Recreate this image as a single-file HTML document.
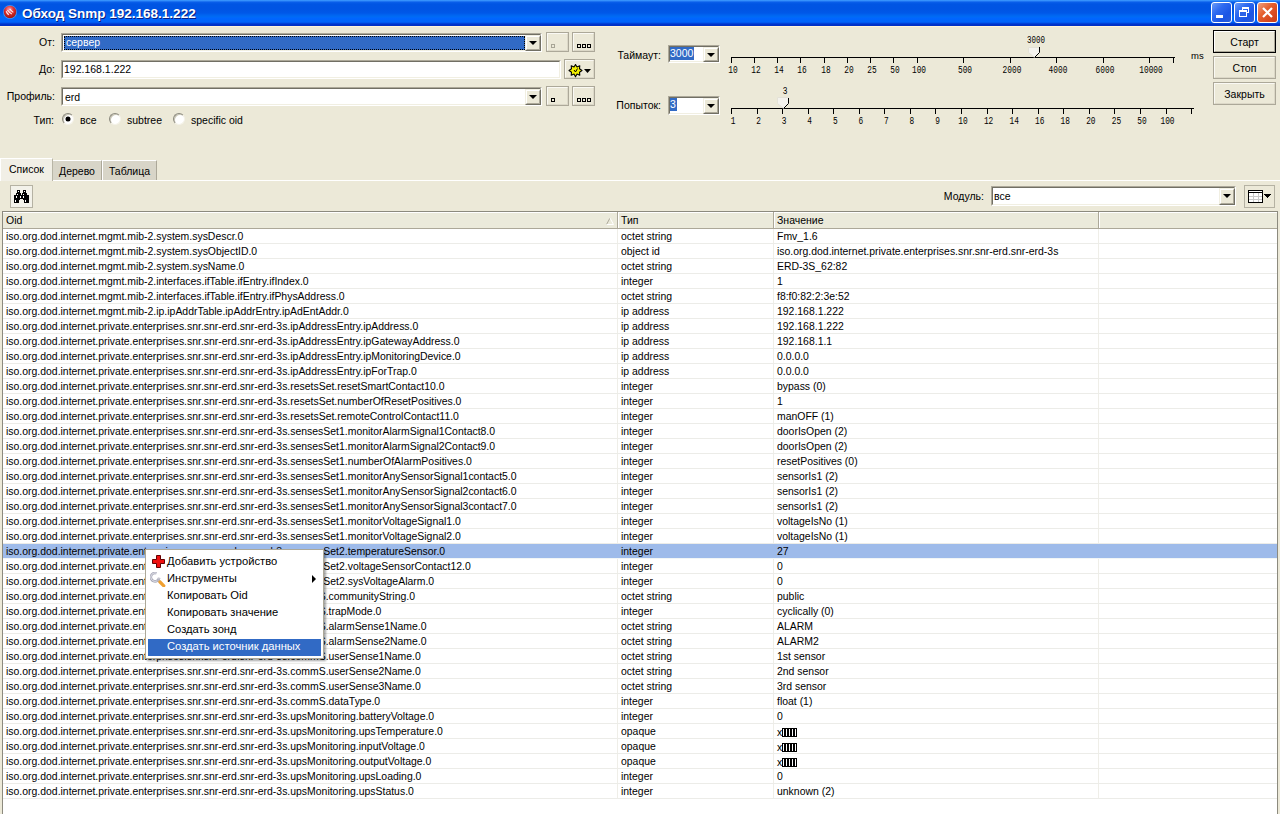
<!DOCTYPE html>
<html><head><meta charset="utf-8">
<style>
*{box-sizing:border-box;margin:0;padding:0}
html,body{width:1280px;height:814px;overflow:hidden}
body{background:#ECE9D8;font-family:"Liberation Sans",sans-serif;font-size:10.5px;color:#000;position:relative}
.abs{position:absolute}
.lbl{position:absolute;white-space:nowrap;line-height:13px}
/* title bar */
#title{position:absolute;left:0;top:0;width:1280px;height:26px;
 background:linear-gradient(#3D9CFF 0px,#2E86F8 1px,#0A5FEA 2px,#0055E3 4px,#0054E3 9px,#0058E8 13px,#0064F0 15px,#006CF5 17px,#0066FF 18px,#0064FA 22px,#0050E6 23px,#0034CC 24px,#0030C4 26px)}
#ttext{position:absolute;left:22px;top:6px;font:bold 13.5px "Liberation Sans",sans-serif;color:#fff;text-shadow:1px 1px 0 #0A1E80;white-space:nowrap;line-height:16px}
.tbtn{position:absolute;top:2px;width:21px;height:21px;border:1px solid #fff;border-radius:3px;
 background:linear-gradient(135deg,#6C9CF8 0%,#2F6BF0 35%,#1B55E5 70%,#2A5CD8 100%)}
.tbtn.close{background:linear-gradient(135deg,#F0A080 0%,#E5602E 40%,#D84A20 70%,#C83E18 100%)}
#bodytop{position:absolute;left:0;top:26px;width:1280px;height:1px;background:#FFF4DA}
/* sunken field */
.field{position:absolute;background:#fff;border-top:1px solid #ACA899;border-left:1px solid #ACA899;border-right:1px solid #fff;border-bottom:1px solid #fff}
.field::before{content:"";position:absolute;left:0;top:0;right:0;bottom:0;border-top:1px solid #716F64;border-left:1px solid #716F64;border-right:1px solid #F1EFE2;border-bottom:1px solid #F1EFE2}
.ftxt{position:absolute;white-space:nowrap;line-height:13px}
.ddb{position:absolute;width:16px;background:#ECE9D8;border-top:1px solid #F1EFE2;border-left:1px solid #F1EFE2;border-right:1px solid #716F64;border-bottom:1px solid #716F64}
.ddb::before{content:"";position:absolute;left:0;top:0;right:0;bottom:0;border-top:1px solid #fff;border-left:1px solid #fff;border-right:1px solid #ACA899;border-bottom:1px solid #ACA899}
.arrow{position:absolute;width:0;height:0;border-left:4px solid transparent;border-right:4px solid transparent;border-top:4px solid #000}
.btn{position:absolute;background:#ECE9D8;border-top:1px solid #fff;border-left:1px solid #fff;border-right:1px solid #ACA899;border-bottom:1px solid #ACA899}
.btn::after{content:"";position:absolute;left:-1px;top:-1px;right:-1px;bottom:-1px;border:1px solid #C5C2B2}
.btn2{position:absolute;background:#ECE9D8;border:1px solid #ACA899}
.btn2::before{content:"";position:absolute;left:0;top:0;right:0;bottom:0;border-top:1px solid #FAF9F4;border-left:1px solid #FAF9F4;border-right:1px solid #DCD8C8;border-bottom:1px solid #DCD8C8}
.sq{position:absolute;width:4px;height:4px;border:1px solid #000}
.radio{position:absolute;width:12px;height:12px;border-radius:50%;background:#fff;
 border:1px solid;border-color:#8A887C #F4F2E8 #F4F2E8 #8A887C;box-shadow:inset 1px 1px 0 #C9C6B6}
.radio.on::after{content:"";position:absolute;left:3px;top:3px;width:4px;height:4px;border-radius:50%;background:#000;box-shadow:0 0 0 0.5px #000}
/* tabs */
.tab{position:absolute;white-space:nowrap;line-height:13px;text-align:center}
/* list */
#list{position:absolute;left:2px;top:211px;width:1276px;height:603px;background:#fff;border-left:1px solid #8C8A7E;border-top:1px solid #8C8A7E;border-right:1px solid #8C8A7E;overflow:hidden}
#hdr{position:absolute;left:0;top:0;width:1275px;height:17px;background:#EBEADB;border-bottom:1px solid #ACA899;border-top:1px solid #fff}
.hc{position:absolute;top:0;height:16px;line-height:14px;white-space:nowrap}
.hsep{position:absolute;top:-1px;width:2px;height:16px;border-left:1px solid #ACA899;border-right:1px solid #fff}
.row{position:absolute;left:0;width:1275px;height:15px;border-bottom:1px solid #ECECE8;white-space:nowrap;line-height:14px;font-size:10.45px}
.row.sel{background:#9EBBEA;border-bottom-color:#F2F6F6}
.row span{position:absolute;top:1px}
.c1{left:3px}.c2{left:618px}.c3{left:774px}
.vg{position:absolute;top:17px;width:1px;height:570px;background:#EFEEE8}
.opq i{display:inline-block;width:3px;height:9px;border:1px solid #000;margin-right:0px;vertical-align:-1px}
/* menu */
#menu{position:absolute;left:145px;top:549px;width:179px;height:110px;background:#fff;border:1px solid #ACA899;box-shadow:2px 2px 2px rgba(0,0,0,0.35)}
.mi{position:absolute;left:2px;margin-top:1px;width:173px;height:17px;line-height:15px;font-size:11.2px;white-space:nowrap;padding-left:20px}
.mi.hl{background:#316AC5;color:#fff}
</style></head><body>

<div id="title">
 <svg class="abs" style="left:0;top:0" width="22" height="24" viewBox="0 0 22 24">
  <defs><radialGradient id="rg" cx="0.45" cy="0.3" r="0.75"><stop offset="0" stop-color="#F8A0B8"/><stop offset="0.45" stop-color="#E03030"/><stop offset="1" stop-color="#901010"/></radialGradient></defs>
  <circle cx="10" cy="12" r="7" fill="#9CD4FF" opacity="0.45"/>
  <circle cx="10" cy="12" r="6.2" fill="url(#rg)"/>
  <path d="M6.2 11.2 Q7 13.5 8.8 14.7 M7.4 10 Q9.5 12.8 11.8 13.9 M9.7 8.8 Q11.5 11 13.3 12.4" stroke="#fff" stroke-width="1.1" fill="none" opacity="0.9"/>
 </svg>
 <div id="ttext">Обход Snmp 192.168.1.222</div>
 <div class="tbtn" style="left:1211px"><div class="abs" style="left:4px;top:12px;width:7px;height:3px;background:#fff"></div></div>
 <div class="tbtn" style="left:1234px">
  <div class="abs" style="left:7px;top:4px;width:7px;height:6px;border:1px solid #fff;border-top-width:2px"></div>
  <div class="abs" style="left:4px;top:7px;width:8px;height:7px;border:1px solid #fff;border-top-width:2px;background:#2B63E8"></div>
 </div>
 <div class="tbtn close" style="left:1257px">
  <svg class="abs" style="left:0;top:0" width="19" height="19"><path d="M5 5L14 14M14 5L5 14" stroke="#fff" stroke-width="2.2"/></svg>
 </div>
</div>
<div id="bodytop"></div>

<!-- От -->
<div class="lbl" style="right:1225px;top:36px">От:</div>
<div class="field" style="left:61px;top:33px;width:481px;height:19px">
 <div class="abs" style="left:2px;top:2px;width:461px;height:14px;background:#316AC5;outline:1px dotted #000;outline-offset:-1px"></div>
 <div class="ftxt" style="left:4px;top:2px;color:#fff">сервер</div>
 <div class="ddb" style="left:463px;top:1px;height:16px"><div class="arrow" style="left:3px;top:5px"></div></div>
</div>
<div class="btn2" style="left:546px;top:32px;width:23px;height:20px"><div class="sq" style="left:4px;top:11px;border-color:#A8A596"></div></div>
<div class="btn2" style="left:572px;top:32px;width:23px;height:20px">
 <div class="sq" style="left:4px;top:11px"></div><div class="sq" style="left:9px;top:11px"></div><div class="sq" style="left:14px;top:11px"></div>
</div>

<!-- До -->
<div class="lbl" style="right:1225px;top:63px">До:</div>
<div class="field" style="left:61px;top:60px;width:500px;height:19px">
 <div class="ftxt" style="left:2px;top:2px">192.168.1.222</div>
</div>
<div class="btn2" style="left:564px;top:59px;width:31px;height:20px">
 <svg class="abs" style="left:3px;top:4px" width="26" height="14" viewBox="0 0 26 14">
  <path d="M7.5 0.5 L9 3 L11.8 1.8 L11.5 4.8 L14 6.5 L11.5 8.2 L11.8 11.2 L9 10 L7.5 12.8 L6 10 L3.2 11.2 L3.5 8.2 L1 6.5 L3.5 4.8 L3.2 1.8 L6 3 Z" fill="#F4F000" stroke="#000" stroke-width="1.1" stroke-linejoin="round"/>
  <path d="M6 6 L7.5 8 L9.5 4.5" stroke="#000" stroke-width="1" fill="none"/>
  <path d="M16 5H23L19.5 9Z" fill="#000"/>
 </svg>
</div>

<!-- Профиль -->
<div class="lbl" style="right:1225px;top:90px">Профиль:</div>
<div class="field" style="left:61px;top:87px;width:481px;height:19px">
 <div class="ftxt" style="left:3px;top:3px">erd</div>
 <div class="ddb" style="left:463px;top:1px;height:16px"><div class="arrow" style="left:3px;top:5px"></div></div>
</div>
<div class="btn2" style="left:546px;top:86px;width:23px;height:20px"><div class="sq" style="left:4px;top:11px"></div></div>
<div class="btn2" style="left:572px;top:86px;width:23px;height:20px">
 <div class="sq" style="left:4px;top:11px"></div><div class="sq" style="left:9px;top:11px"></div><div class="sq" style="left:14px;top:11px"></div>
</div>

<!-- Тип -->
<div class="lbl" style="right:1226px;top:114px">Тип:</div>
<div class="radio on" style="left:62px;top:113px"></div>
<div class="lbl" style="left:80px;top:114px">все</div>
<div class="radio" style="left:109px;top:113px"></div>
<div class="lbl" style="left:127px;top:114px">subtree</div>
<div class="radio" style="left:173px;top:113px"></div>
<div class="lbl" style="left:191px;top:114px">specific oid</div>

<!-- timeout -->
<div class="lbl" style="right:619px;top:49px">Таймаут:</div>
<div class="field" style="left:668px;top:45px;width:52px;height:18px">
 <div class="abs" style="left:1px;top:1px;width:24px;height:13px;background:#316AC5"></div>
 <div class="ftxt" style="left:1px;top:1px;color:#fff">3000</div>
 <div class="ddb" style="left:34px;top:1px;height:15px"><div class="arrow" style="left:3px;top:5px"></div></div>
</div>
<div class="lbl" style="right:619px;top:99px">Попыток:</div>
<div class="field" style="left:668px;top:96px;width:52px;height:19px">
 <div class="abs" style="left:1px;top:1px;width:7px;height:13px;background:#316AC5"></div>
 <div class="ftxt" style="left:1px;top:1px;color:#fff">3</div>
 <div class="ddb" style="left:34px;top:1px;height:16px"><div class="arrow" style="left:3px;top:5px"></div></div>
</div>
<svg class="abs" style="left:0;top:0" width="1280" height="140" font-family="Liberation Mono" font-size="10.5"><path d="M731 57.5H1175M731.5 57V63M754.5 57V63M777.5 57V63M800.5 57V63M824.5 57V63M847.5 57V63M870.5 57V63M893.5 57V63M917.5 57V63M963.5 57V63M1010.5 57V63M1056.5 57V63M1103.5 57V63M1149.5 57V63M1173.5 57V63" stroke="#000" stroke-width="1" fill="none"/><text x="733.0" y="73" text-anchor="middle" textLength="9.4" lengthAdjust="spacingAndGlyphs">10</text><text x="756.0" y="73" text-anchor="middle" textLength="9.4" lengthAdjust="spacingAndGlyphs">12</text><text x="779.0" y="73" text-anchor="middle" textLength="9.4" lengthAdjust="spacingAndGlyphs">14</text><text x="802.0" y="73" text-anchor="middle" textLength="9.4" lengthAdjust="spacingAndGlyphs">16</text><text x="826.0" y="73" text-anchor="middle" textLength="9.4" lengthAdjust="spacingAndGlyphs">18</text><text x="849.0" y="73" text-anchor="middle" textLength="9.4" lengthAdjust="spacingAndGlyphs">20</text><text x="872.0" y="73" text-anchor="middle" textLength="9.4" lengthAdjust="spacingAndGlyphs">25</text><text x="895.0" y="73" text-anchor="middle" textLength="9.4" lengthAdjust="spacingAndGlyphs">50</text><text x="919.0" y="73" text-anchor="middle" textLength="14.1" lengthAdjust="spacingAndGlyphs">100</text><text x="965.0" y="73" text-anchor="middle" textLength="14.1" lengthAdjust="spacingAndGlyphs">500</text><text x="1012.0" y="73" text-anchor="middle" textLength="18.8" lengthAdjust="spacingAndGlyphs">2000</text><text x="1058.0" y="73" text-anchor="middle" textLength="18.8" lengthAdjust="spacingAndGlyphs">4000</text><text x="1105.0" y="73" text-anchor="middle" textLength="18.8" lengthAdjust="spacingAndGlyphs">6000</text><text x="1151.0" y="73" text-anchor="middle" textLength="23.5" lengthAdjust="spacingAndGlyphs">10000</text><path d="M731 108.5H1194M731.5 108V114M757.5 108V114M782.5 108V114M808.5 108V114M833.5 108V114M859.5 108V114M884.5 108V114M910.5 108V114M935.5 108V114M961.5 108V114M987.5 108V114M1012.5 108V114M1038.5 108V114M1063.5 108V114M1089.5 108V114M1114.5 108V114M1140.5 108V114M1166.5 108V114M1191.5 108V114" stroke="#000" stroke-width="1" fill="none"/><text x="733.0" y="124" text-anchor="middle" textLength="4.7" lengthAdjust="spacingAndGlyphs">1</text><text x="758.56" y="124" text-anchor="middle" textLength="4.7" lengthAdjust="spacingAndGlyphs">2</text><text x="784.12" y="124" text-anchor="middle" textLength="4.7" lengthAdjust="spacingAndGlyphs">3</text><text x="809.68" y="124" text-anchor="middle" textLength="4.7" lengthAdjust="spacingAndGlyphs">4</text><text x="835.24" y="124" text-anchor="middle" textLength="4.7" lengthAdjust="spacingAndGlyphs">5</text><text x="860.8" y="124" text-anchor="middle" textLength="4.7" lengthAdjust="spacingAndGlyphs">6</text><text x="886.36" y="124" text-anchor="middle" textLength="4.7" lengthAdjust="spacingAndGlyphs">7</text><text x="911.92" y="124" text-anchor="middle" textLength="4.7" lengthAdjust="spacingAndGlyphs">8</text><text x="937.48" y="124" text-anchor="middle" textLength="4.7" lengthAdjust="spacingAndGlyphs">9</text><text x="963.04" y="124" text-anchor="middle" textLength="9.4" lengthAdjust="spacingAndGlyphs">10</text><text x="988.6" y="124" text-anchor="middle" textLength="9.4" lengthAdjust="spacingAndGlyphs">12</text><text x="1014.16" y="124" text-anchor="middle" textLength="9.4" lengthAdjust="spacingAndGlyphs">14</text><text x="1039.72" y="124" text-anchor="middle" textLength="9.4" lengthAdjust="spacingAndGlyphs">16</text><text x="1065.28" y="124" text-anchor="middle" textLength="9.4" lengthAdjust="spacingAndGlyphs">18</text><text x="1090.84" y="124" text-anchor="middle" textLength="9.4" lengthAdjust="spacingAndGlyphs">20</text><text x="1116.4" y="124" text-anchor="middle" textLength="9.4" lengthAdjust="spacingAndGlyphs">25</text><text x="1141.96" y="124" text-anchor="middle" textLength="9.4" lengthAdjust="spacingAndGlyphs">50</text><text x="1167.52" y="124" text-anchor="middle" textLength="14.1" lengthAdjust="spacingAndGlyphs">100</text><path d="M1028.5 47.5H1039.5V52.5L1034.5 57.5L1028.5 52.5Z" fill="#F4F3EE" stroke="#E4E2D8"/><path d="M1039.5 47V52.5L1034.5 57.5" fill="none" stroke="#000"/><text x="1036" y="43" text-anchor="middle" textLength="18" lengthAdjust="spacingAndGlyphs">3000</text><path d="M777.5 97.5H788.5V103.5L783.5 108.5L777.5 103.5Z" fill="#F4F3EE" stroke="#E4E2D8"/><path d="M788.5 98V103.5L783.5 108.5" fill="none" stroke="#000"/><text x="785" y="94" text-anchor="middle" textLength="4.7" lengthAdjust="spacingAndGlyphs">3</text></svg>
<div class="lbl" style="left:1191px;top:49px;font-size:9.5px">ms</div>

<!-- buttons -->
<div class="abs" style="left:1213px;top:30px;width:63px;height:23px;border:1px solid #000;background:#ECE9D8">
 <div class="abs" style="left:0;top:0;width:61px;height:21px;border-top:1px solid #fff;border-left:1px solid #fff;border-right:1px solid #ACA899;border-bottom:1px solid #ACA899"></div>
 <div class="lbl" style="left:0;width:61px;text-align:center;top:5px">Старт</div>
</div>
<div class="btn2" style="left:1213px;top:56px;width:63px;height:23px"><div class="lbl" style="left:0;width:61px;text-align:center;top:5px">Стоп</div></div>
<div class="btn2" style="left:1213px;top:82px;width:63px;height:23px"><div class="lbl" style="left:0;width:61px;text-align:center;top:5px">Закрыть</div></div>

<!-- tabs -->
<div class="abs" style="left:0;top:180px;width:1280px;height:1px;background:#fff"></div>
<div class="abs" style="left:52px;top:160px;width:50px;height:20px;background:#D8D5C8;border-top:1px solid #fff;border-left:1px solid #fff;border-right:1px solid #ACA899"></div>
<div class="tab" style="left:52px;top:165px;width:50px">Дерево</div>
<div class="abs" style="left:102px;top:160px;width:55px;height:20px;background:#D8D5C8;border-top:1px solid #fff;border-left:1px solid #fff;border-right:1px solid #ACA899"></div>
<div class="tab" style="left:102px;top:165px;width:55px">Таблица</div>
<div class="abs" style="left:0px;top:158px;width:53px;height:23px;background:#F1EFE6;border-top:1px solid #fff;border-left:1px solid #fff;border-right:1px solid #B8B5A6"></div>
<div class="tab" style="left:1px;top:163px;width:51px">Список</div>

<!-- toolbar -->
<div class="abs" style="left:10px;top:185px;width:23px;height:23px;border:1px solid #B5B2A3;background:#F3F2EA">
 <svg class="abs" style="left:3px;top:4px" width="15" height="13" shape-rendering="crispEdges">
  <path d="M3 0h3v3h-3zM9 0h3v3h-3zM2 3h5v2h-5zM8 3h5v2h-5zM0 5h15v4h-15zM0 9h5v4h-5zM10 9h5v4h-5zM5 9h1v1h-1zM9 9h1v1h-1z" fill="#000"/>
  <path d="M4 1h1v1h-1zM10 1h1v1h-1zM3 4h1v1h-1zM9 4h1v1h-1zM2 6h1v2h-1zM6 6h1v2h-1zM9 6h1v2h-1zM1 10h1v2h-1zM11 10h1v2h-1z" fill="#fff"/>
 </svg>
</div>
<div class="lbl" style="right:296px;top:190px">Модуль:</div>
<div class="field" style="left:991px;top:186px;width:245px;height:20px">
 <div class="ftxt" style="left:2px;top:3px">все</div>
 <div class="ddb" style="left:227px;top:1px;height:17px"><div class="arrow" style="left:3px;top:5px"></div></div>
</div>
<div class="abs" style="left:1244px;top:185px;width:31px;height:23px;border:1px solid #B5B2A3;background:#ECE9D8">
 <svg class="abs" style="left:3px;top:4px" width="26" height="14" shape-rendering="crispEdges">
  <rect x="0" y="0" width="15" height="13" fill="#000"/>
  <rect x="1" y="1" width="13" height="1" fill="#fff"/>
  <rect x="1" y="3" width="13" height="9" fill="#fff"/>
  <path d="M1 6h13M1 9h13M5 3v9M10 3v9" stroke="#C8C8C8" fill="none"/>
  <path d="M16 4h7v1h-1v1h-1v1h-1v1h-1v-1h-1v-1h-1v-1h-1z" fill="#000"/>
 </svg>
</div>

<!-- list -->
<div id="list">
 <div id="hdr">
  <div class="hc" style="left:3px">Oid</div>
  <svg class="abs" style="left:602px;top:4px" width="10" height="8"><path d="M1.5 7.5L5 1" stroke="#ACA899" fill="none"/><path d="M5 1L8.5 7.5H1.5" stroke="#fff" fill="none"/></svg>
  <div class="hsep" style="left:614px"></div>
  <div class="hc" style="left:618px">Тип</div>
  <div class="hsep" style="left:770px"></div>
  <div class="hc" style="left:774px">Значение</div>
  <div class="hsep" style="left:1095px"></div>
 </div>
 <div class="vg" style="left:614px"></div>
 <div class="vg" style="left:770px"></div>
 <div class="vg" style="left:1095px"></div>
<div class="row" style="top:17px"><span class="c1">iso.org.dod.internet.mgmt.mib-2.system.sysDescr.0</span><span class="c2">octet string</span><span class="c3">Fmv_1.6</span></div>
<div class="row" style="top:32px"><span class="c1">iso.org.dod.internet.mgmt.mib-2.system.sysObjectID.0</span><span class="c2">object id</span><span class="c3">iso.org.dod.internet.private.enterprises.snr.snr-erd.snr-erd-3s</span></div>
<div class="row" style="top:47px"><span class="c1">iso.org.dod.internet.mgmt.mib-2.system.sysName.0</span><span class="c2">octet string</span><span class="c3">ERD-3S_62:82</span></div>
<div class="row" style="top:62px"><span class="c1">iso.org.dod.internet.mgmt.mib-2.interfaces.ifTable.ifEntry.ifIndex.0</span><span class="c2">integer</span><span class="c3">1</span></div>
<div class="row" style="top:77px"><span class="c1">iso.org.dod.internet.mgmt.mib-2.interfaces.ifTable.ifEntry.ifPhysAddress.0</span><span class="c2">octet string</span><span class="c3">f8:f0:82:2:3e:52</span></div>
<div class="row" style="top:92px"><span class="c1">iso.org.dod.internet.mgmt.mib-2.ip.ipAddrTable.ipAddrEntry.ipAdEntAddr.0</span><span class="c2">ip address</span><span class="c3">192.168.1.222</span></div>
<div class="row" style="top:107px"><span class="c1">iso.org.dod.internet.private.enterprises.snr.snr-erd.snr-erd-3s.ipAddressEntry.ipAddress.0</span><span class="c2">ip address</span><span class="c3">192.168.1.222</span></div>
<div class="row" style="top:122px"><span class="c1">iso.org.dod.internet.private.enterprises.snr.snr-erd.snr-erd-3s.ipAddressEntry.ipGatewayAddress.0</span><span class="c2">ip address</span><span class="c3">192.168.1.1</span></div>
<div class="row" style="top:137px"><span class="c1">iso.org.dod.internet.private.enterprises.snr.snr-erd.snr-erd-3s.ipAddressEntry.ipMonitoringDevice.0</span><span class="c2">ip address</span><span class="c3">0.0.0.0</span></div>
<div class="row" style="top:152px"><span class="c1">iso.org.dod.internet.private.enterprises.snr.snr-erd.snr-erd-3s.ipAddressEntry.ipForTrap.0</span><span class="c2">ip address</span><span class="c3">0.0.0.0</span></div>
<div class="row" style="top:167px"><span class="c1">iso.org.dod.internet.private.enterprises.snr.snr-erd.snr-erd-3s.resetsSet.resetSmartContact10.0</span><span class="c2">integer</span><span class="c3">bypass (0)</span></div>
<div class="row" style="top:182px"><span class="c1">iso.org.dod.internet.private.enterprises.snr.snr-erd.snr-erd-3s.resetsSet.numberOfResetPositives.0</span><span class="c2">integer</span><span class="c3">1</span></div>
<div class="row" style="top:197px"><span class="c1">iso.org.dod.internet.private.enterprises.snr.snr-erd.snr-erd-3s.resetsSet.remoteControlContact11.0</span><span class="c2">integer</span><span class="c3">manOFF (1)</span></div>
<div class="row" style="top:212px"><span class="c1">iso.org.dod.internet.private.enterprises.snr.snr-erd.snr-erd-3s.sensesSet1.monitorAlarmSignal1Contact8.0</span><span class="c2">integer</span><span class="c3">doorIsOpen (2)</span></div>
<div class="row" style="top:227px"><span class="c1">iso.org.dod.internet.private.enterprises.snr.snr-erd.snr-erd-3s.sensesSet1.monitorAlarmSignal2Contact9.0</span><span class="c2">integer</span><span class="c3">doorIsOpen (2)</span></div>
<div class="row" style="top:242px"><span class="c1">iso.org.dod.internet.private.enterprises.snr.snr-erd.snr-erd-3s.sensesSet1.numberOfAlarmPositives.0</span><span class="c2">integer</span><span class="c3">resetPositives (0)</span></div>
<div class="row" style="top:257px"><span class="c1">iso.org.dod.internet.private.enterprises.snr.snr-erd.snr-erd-3s.sensesSet1.monitorAnySensorSignal1contact5.0</span><span class="c2">integer</span><span class="c3">sensorIs1 (2)</span></div>
<div class="row" style="top:272px"><span class="c1">iso.org.dod.internet.private.enterprises.snr.snr-erd.snr-erd-3s.sensesSet1.monitorAnySensorSignal2contact6.0</span><span class="c2">integer</span><span class="c3">sensorIs1 (2)</span></div>
<div class="row" style="top:287px"><span class="c1">iso.org.dod.internet.private.enterprises.snr.snr-erd.snr-erd-3s.sensesSet1.monitorAnySensorSignal3contact7.0</span><span class="c2">integer</span><span class="c3">sensorIs1 (2)</span></div>
<div class="row" style="top:302px"><span class="c1">iso.org.dod.internet.private.enterprises.snr.snr-erd.snr-erd-3s.sensesSet1.monitorVoltageSignal1.0</span><span class="c2">integer</span><span class="c3">voltageIsNo (1)</span></div>
<div class="row" style="top:317px"><span class="c1">iso.org.dod.internet.private.enterprises.snr.snr-erd.snr-erd-3s.sensesSet1.monitorVoltageSignal2.0</span><span class="c2">integer</span><span class="c3">voltageIsNo (1)</span></div>
<div class="row sel" style="top:332px"><span class="c1">iso.org.dod.internet.private.enterprises.snr.snr-erd.snr-erd-3s.sensesSet2.temperatureSensor.0</span><span class="c2">integer</span><span class="c3">27</span></div>
<div class="row" style="top:347px"><span class="c1">iso.org.dod.internet.private.enterprises.snr.snr-erd.snr-erd-3s.sensesSet2.voltageSensorContact12.0</span><span class="c2">integer</span><span class="c3">0</span></div>
<div class="row" style="top:362px"><span class="c1">iso.org.dod.internet.private.enterprises.snr.snr-erd.snr-erd-3s.sensesSet2.sysVoltageAlarm.0</span><span class="c2">integer</span><span class="c3">0</span></div>
<div class="row" style="top:377px"><span class="c1">iso.org.dod.internet.private.enterprises.snr.snr-erd.snr-erd-3s.commS.communityString.0</span><span class="c2">octet string</span><span class="c3">public</span></div>
<div class="row" style="top:392px"><span class="c1">iso.org.dod.internet.private.enterprises.snr.snr-erd.snr-erd-3s.commS.trapMode.0</span><span class="c2">integer</span><span class="c3">cyclically (0)</span></div>
<div class="row" style="top:407px"><span class="c1">iso.org.dod.internet.private.enterprises.snr.snr-erd.snr-erd-3s.commS.alarmSense1Name.0</span><span class="c2">octet string</span><span class="c3">ALARM</span></div>
<div class="row" style="top:422px"><span class="c1">iso.org.dod.internet.private.enterprises.snr.snr-erd.snr-erd-3s.commS.alarmSense2Name.0</span><span class="c2">octet string</span><span class="c3">ALARM2</span></div>
<div class="row" style="top:437px"><span class="c1">iso.org.dod.internet.private.enterprises.snr.snr-erd.snr-erd-3s.commS.userSense1Name.0</span><span class="c2">octet string</span><span class="c3">1st sensor</span></div>
<div class="row" style="top:452px"><span class="c1">iso.org.dod.internet.private.enterprises.snr.snr-erd.snr-erd-3s.commS.userSense2Name.0</span><span class="c2">octet string</span><span class="c3">2nd sensor</span></div>
<div class="row" style="top:467px"><span class="c1">iso.org.dod.internet.private.enterprises.snr.snr-erd.snr-erd-3s.commS.userSense3Name.0</span><span class="c2">octet string</span><span class="c3">3rd sensor</span></div>
<div class="row" style="top:482px"><span class="c1">iso.org.dod.internet.private.enterprises.snr.snr-erd.snr-erd-3s.commS.dataType.0</span><span class="c2">integer</span><span class="c3">float (1)</span></div>
<div class="row" style="top:497px"><span class="c1">iso.org.dod.internet.private.enterprises.snr.snr-erd.snr-erd-3s.upsMonitoring.batteryVoltage.0</span><span class="c2">integer</span><span class="c3">0</span></div>
<div class="row" style="top:512px"><span class="c1">iso.org.dod.internet.private.enterprises.snr.snr-erd.snr-erd-3s.upsMonitoring.upsTemperature.0</span><span class="c2">opaque</span><span class="c3"><span class="opq">x<i></i><i></i><i></i><i></i><i></i></span></span></div>
<div class="row" style="top:527px"><span class="c1">iso.org.dod.internet.private.enterprises.snr.snr-erd.snr-erd-3s.upsMonitoring.inputVoltage.0</span><span class="c2">opaque</span><span class="c3"><span class="opq">x<i></i><i></i><i></i><i></i><i></i></span></span></div>
<div class="row" style="top:542px"><span class="c1">iso.org.dod.internet.private.enterprises.snr.snr-erd.snr-erd-3s.upsMonitoring.outputVoltage.0</span><span class="c2">opaque</span><span class="c3"><span class="opq">x<i></i><i></i><i></i><i></i><i></i></span></span></div>
<div class="row" style="top:557px"><span class="c1">iso.org.dod.internet.private.enterprises.snr.snr-erd.snr-erd-3s.upsMonitoring.upsLoading.0</span><span class="c2">integer</span><span class="c3">0</span></div>
<div class="row" style="top:572px"><span class="c1">iso.org.dod.internet.private.enterprises.snr.snr-erd.snr-erd-3s.upsMonitoring.upsStatus.0</span><span class="c2">integer</span><span class="c3">unknown (2)</span></div>
</div>

<!-- context menu -->
<div id="menu">
 <div class="mi" style="top:3px;padding-left:19px">Добавить устройство</div>
 <svg class="abs" style="left:6px;top:5px" width="13" height="13"><path d="M4.5 0.5h4v4h4v4h-4v4h-4v-4h-4v-4h4z" fill="#F01010" stroke="#600" stroke-width="1"/></svg>
 <div class="mi" style="top:20px;padding-left:19px">Инструменты</div>
 <svg class="abs" style="left:4px;top:22px" width="16" height="15" viewBox="0 0 16 15">
  <path d="M6.5 1.2 A4.2 4.2 0 1 0 9.2 5.8" fill="none" stroke="#A9AAB8" stroke-width="2.6"/>
  <path d="M6.5 1.2 A4.2 4.2 0 1 0 9.2 5.8" fill="none" stroke="#E4E4EC" stroke-width="1"/>
  <path d="M7.5 7.5 L10 10" stroke="#B8B8C4" stroke-width="2.8"/>
  <path d="M10 10 L13.8 13.8" stroke="#F0A030" stroke-width="3.2" stroke-linecap="round"/>
 </svg>
 <div class="abs" style="left:166px;top:25px;width:0;height:0;border-top:4px solid transparent;border-bottom:4px solid transparent;border-left:4px solid #000"></div>
 <div class="mi" style="top:37px;padding-left:19px">Копировать Oid</div>
 <div class="mi" style="top:54px;padding-left:19px">Копировать значение</div>
 <div class="mi" style="top:71px;padding-left:19px">Создать зонд</div>
 <div class="mi hl" style="top:88px;padding-left:19px">Создать источник данных</div>
</div>

</body></html>
